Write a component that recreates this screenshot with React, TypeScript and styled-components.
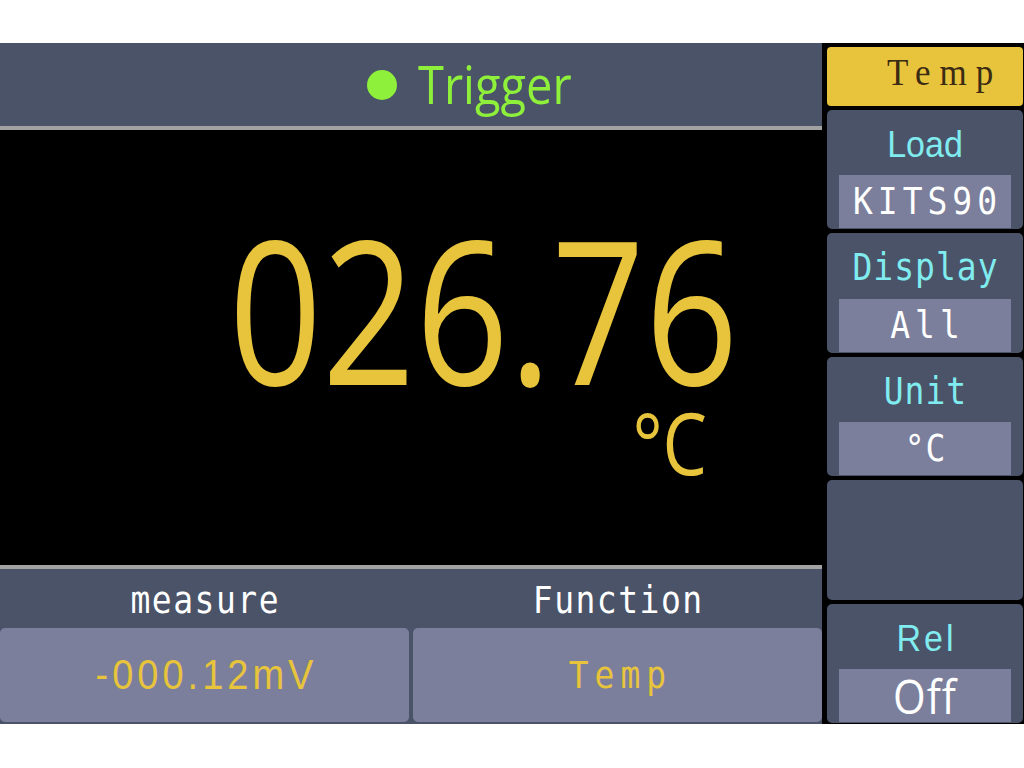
import styled, { createGlobalStyle, css } from "styled-components";

const GlobalStyle = createGlobalStyle`
  * {
    box-sizing: border-box;
  }
  body {
    margin: 0;
    background: #ffffff;
    font-family: "Liberation Sans", Arial, sans-serif;
  }
`;

const palette = {
  panel: "#4a5368",
  field: "#7b7f9b",
  rule: "#a2a2a2",
  yellow: "#e7c43b",
  green: "#8ef03a",
  cyan: "#80ecef",
  white: "#ffffff",
};

const stretch = css`
  display: inline-block;
  transform: scaleY(1.11);
`;

const mono = `"DejaVu Sans Mono", "Liberation Mono", monospace`;

type Item = { label: string; value: string; labelFont?: "mono" | "sans"; valueFont?: "mono" | "open" };

const softkeys: (Item | null)[] = [
  { label: "Load", value: "KITS90", labelFont: "sans" },
  { label: "Display", value: "All" },
  { label: "Unit", value: "°C" },
  null,
  { label: "Rel", value: "Off", labelFont: "sans", valueFont: "open" },
];

function App() {
  return (
    <>
      <GlobalStyle />
      <Device>
        <Main>
          <Header>
            <StatusDot />
            <StatusText>Trigger</StatusText>
          </Header>
          <Readout>
            <BigValue>026.76</BigValue>
            <BigUnit>°C</BigUnit>
          </Readout>
          <Footer>
            <FooterLabel>
              <MonoText>measure</MonoText>
            </FooterLabel>
            <FooterLabel>
              <MonoText>Function</MonoText>
            </FooterLabel>
            <FooterField>
              <MeasureText>-000.12mV</MeasureText>
            </FooterField>
            <FooterField>
              <MonoText $color={palette.yellow} $spacing={6}>
                Temp
              </MonoText>
            </FooterField>
          </Footer>
        </Main>
        <Side>
          <ModeTab>
            <ModeText>Temp</ModeText>
          </ModeTab>
          {softkeys.map((key, i) =>
            key ? (
              <Softkey key={i}>
                <SoftkeyLabel>
                  {key.labelFont === "sans" ? (
                    <SansLabel $spacing={key.label === "Rel" ? 3 : 0}>{key.label}</SansLabel>
                  ) : (
                    <MonoText $color={palette.cyan} $spacing={1}>
                      {key.label}
                    </MonoText>
                  )}
                </SoftkeyLabel>
                <SoftkeyValue>
                  {key.valueFont === "open" ? (
                    <OffText>{key.value}</OffText>
                  ) : (
                    <MonoText $spacing={key.value === "°C" ? 1 : 5}>{key.value}</MonoText>
                  )}
                </SoftkeyValue>
              </Softkey>
            ) : (
              <Softkey key={i} />
            )
          )}
        </Side>
      </Device>
    </>
  );
}

const Device = styled.div`
  display: flex;
  width: 1024px;
  height: 681px;
  margin-top: 43px;
  background: #000;
`;

const Main = styled.div`
  display: flex;
  flex-direction: column;
  width: 822px;
`;

const Header = styled.div`
  display: flex;
  align-items: center;
  justify-content: center;
  gap: 21px;
  height: 87px;
  padding-left: 118px;
  background: ${palette.panel};
  border-bottom: 4px solid ${palette.rule};
`;

const StatusDot = styled.span`
  width: 30px;
  height: 30px;
  border-radius: 50%;
  background: ${palette.green};
`;

const StatusText = styled.span`
  ${stretch};
  font-family: "Open Sans", "Noto Sans", sans-serif;
  font-weight: 500;
  font-size: 47px;
  line-height: 1;
  color: ${palette.green};
  width: 155px;
`;

const Readout = styled.div`
  flex: 1;
  display: flex;
  flex-direction: column;
  align-items: flex-end;
  padding-right: 84px;
  background: #000;
  color: ${palette.yellow};
  font-family: "Open Sans", "Noto Sans", sans-serif;
  font-weight: 500;
`;

const BigValue = styled.div`
  font-size: 199px;
  line-height: 190px;
  margin-top: 83px;
  transform: scaleX(0.82);
  transform-origin: right center;
`;

const BigUnit = styled.div`
  font-size: 86px;
  line-height: 76px;
  margin-top: 1px;
  margin-right: 31px;
  transform: scaleX(0.82);
  transform-origin: right center;
`;

const Footer = styled.div`
  display: grid;
  grid-template-columns: 409px 1fr;
  grid-template-rows: 59px 94px;
  column-gap: 4px;
  height: 159px;
  padding-bottom: 2px;
  background: ${palette.panel};
  border-top: 4px solid ${palette.rule};
`;

const FooterLabel = styled.div`
  display: flex;
  align-items: center;
  justify-content: center;
  padding-top: 4px;
`;

const FooterField = styled.div`
  display: flex;
  align-items: center;
  justify-content: center;
  background: ${palette.field};
  border-radius: 5px;
`;

const MonoText = styled.span<{ $color?: string; $spacing?: number }>`
  ${stretch};
  font-family: ${mono};
  font-size: 33px;
  line-height: 1;
  color: ${(p) => p.$color ?? palette.white};
  letter-spacing: ${(p) => p.$spacing ?? 1.5}px;
  margin-right: ${(p) => -(p.$spacing ?? 1.5)}px;
`;

const MeasureText = styled.span`
  ${stretch};
  font-family: "Liberation Sans", Arial, sans-serif;
  font-size: 38px;
  line-height: 1;
  letter-spacing: 4px;
  margin-right: -4px;
  color: ${palette.yellow};
`;

const Side = styled.div`
  display: flex;
  flex-direction: column;
  gap: 4px;
  width: 202px;
  padding: 4px 1px 1px 5px;
  background: #000;
`;

const ModeTab = styled.div`
  display: flex;
  align-items: center;
  height: 59px;
  flex-shrink: 0;
  padding: 0 0 8px 60px;
  background: ${palette.yellow};
  border-radius: 4px;
`;

const ModeText = styled.span`
  ${stretch};
  font-family: "Liberation Serif", "Times New Roman", serif;
  font-size: 35px;
  line-height: 1;
  letter-spacing: 9px;
  color: #3b2b14;
`;

const Softkey = styled.div`
  flex: 1;
  display: flex;
  flex-direction: column;
  background: ${palette.panel};
  border-radius: 5px;
`;

const SoftkeyLabel = styled.div`
  flex: 1;
  display: flex;
  align-items: center;
  justify-content: center;
  padding-top: 3px;
`;

const SansLabel = styled.span<{ $spacing: number }>`
  ${stretch};
  font-family: "Liberation Sans", Arial, sans-serif;
  font-size: 34px;
  line-height: 1;
  color: ${palette.cyan};
  letter-spacing: ${(p) => p.$spacing}px;
  margin-right: ${(p) => -p.$spacing}px;
`;

const SoftkeyValue = styled.div`
  display: flex;
  align-items: center;
  justify-content: center;
  height: 53px;
  margin: 0 12px 1px;
  background: ${palette.field};
`;

const OffText = styled.span`
  ${stretch};
  font-family: "Open Sans", "Noto Sans", sans-serif;
  font-size: 42px;
  line-height: 1;
  letter-spacing: 1px;
  color: ${palette.white};
`;

export default App;
